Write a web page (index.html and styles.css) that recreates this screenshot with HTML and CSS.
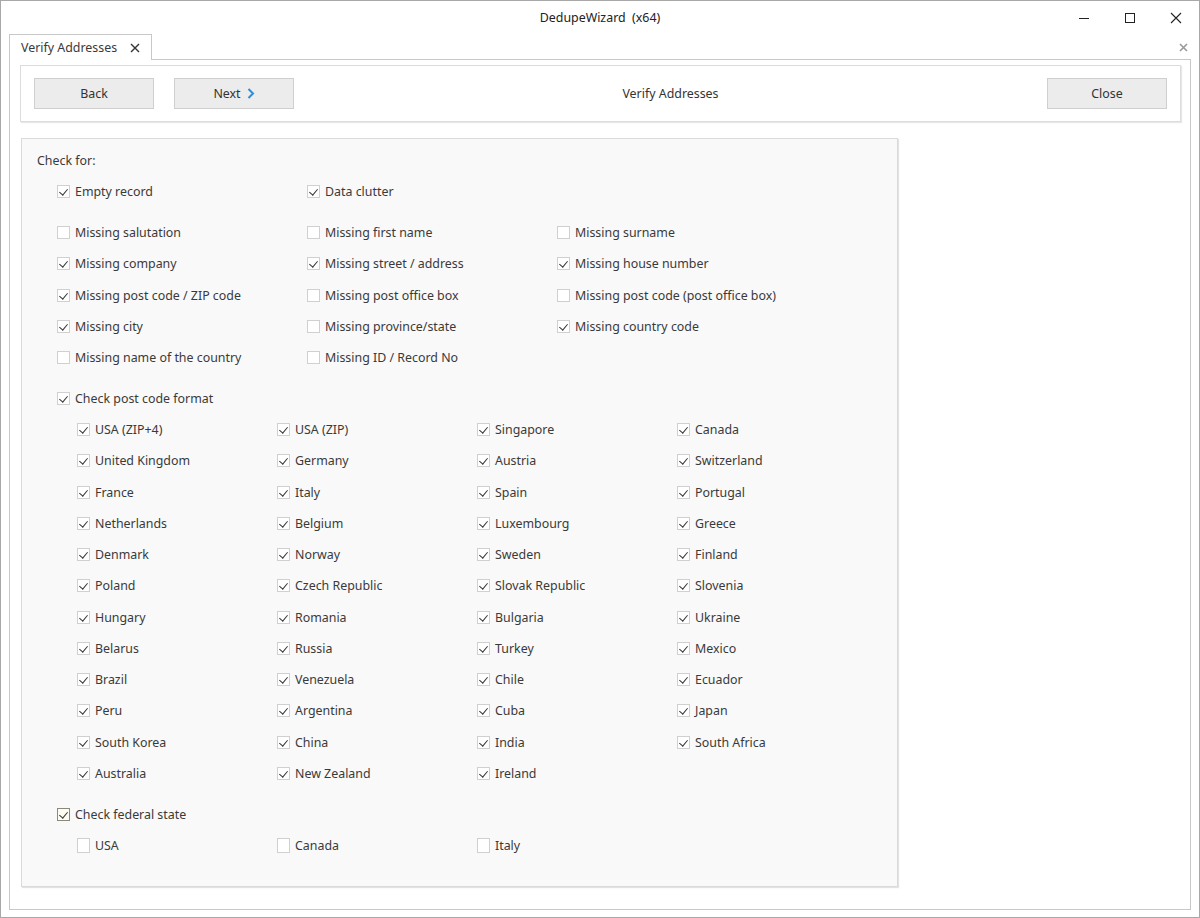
FILE: index.html
```html
<!DOCTYPE html>
<html>
<head>
<meta charset="utf-8">
<link rel="stylesheet" href="styles.css">
</head>
<body>
<div class="window">
  <div class="titlebar">
    <div class="title">DedupeWizard&nbsp; (x64)</div>
    <div class="controls">
      <span class="ctl"><svg width="12" height="12" viewBox="0 0 12 12"><path d="M1 6.5H11" stroke="#222" stroke-width="1"/></svg></span>
      <span class="ctl"><svg width="12" height="12" viewBox="0 0 12 12"><rect x="1.5" y="1.5" width="9" height="9" fill="none" stroke="#222" stroke-width="1"/></svg></span>
      <span class="ctl"><svg width="12" height="12" viewBox="0 0 12 12"><path d="M1 1L11 11M11 1L1 11" stroke="#222" stroke-width="1.1"/></svg></span>
    </div>
  </div>
  <div class="tabstrip">
    <div class="tab">
      <span>Verify Addresses</span>
      <svg class="tabx" width="10" height="10" viewBox="0 0 10 10"><path d="M1 1L9 9M9 1L1 9" stroke="#333" stroke-width="1.4"/></svg>
    </div>
    <svg class="stripx" width="9" height="9" viewBox="0 0 9 9"><path d="M1 1L8 8M8 1L1 8" stroke="#999" stroke-width="1.6"/></svg>
  </div>
  <div class="content">
    <div class="toolbar">
      <div class="btn">Back</div>
      <div class="btn">Next <svg class="chev" width="8" height="11" viewBox="0 0 8 11"><path d="M1.5 1L6 5.5L1.5 10" fill="none" stroke="#2a8fd6" stroke-width="2"/></svg></div>
      <div class="tb-title">Verify Addresses</div>
      <div class="btn">Close</div>
    </div>
    <div class="group">
      <div class="row label-row">Check for:</div>
      <div class="grid main gap-after">
        <label class="item"><span class="cb on"></span>Empty record</label>
        <label class="item"><span class="cb on"></span>Data clutter</label>
      </div>
      <div class="grid main">
        <label class="item"><span class="cb"></span>Missing salutation</label>
        <label class="item"><span class="cb"></span>Missing first name</label>
        <label class="item"><span class="cb"></span>Missing surname</label>
        <label class="item"><span class="cb on"></span>Missing company</label>
        <label class="item"><span class="cb on"></span>Missing street / address</label>
        <label class="item"><span class="cb on"></span>Missing house number</label>
        <label class="item"><span class="cb on"></span>Missing post code / ZIP code</label>
        <label class="item"><span class="cb"></span>Missing post office box</label>
        <label class="item"><span class="cb"></span>Missing post code (post office box)</label>
        <label class="item"><span class="cb on"></span>Missing city</label>
        <label class="item"><span class="cb"></span>Missing province/state</label>
        <label class="item"><span class="cb on"></span>Missing country code</label>
        <label class="item"><span class="cb"></span>Missing name of the country</label>
        <label class="item"><span class="cb"></span>Missing ID / Record No</label>
      </div>
      <div class="grid main gap-before">
        <label class="item"><span class="cb on"></span>Check post code format</label>
      </div>
      <div class="grid sub">
        <label class="item"><span class="cb on"></span>USA (ZIP+4)</label>
        <label class="item"><span class="cb on"></span>USA (ZIP)</label>
        <label class="item"><span class="cb on"></span>Singapore</label>
        <label class="item"><span class="cb on"></span>Canada</label>
        <label class="item"><span class="cb on"></span>United Kingdom</label>
        <label class="item"><span class="cb on"></span>Germany</label>
        <label class="item"><span class="cb on"></span>Austria</label>
        <label class="item"><span class="cb on"></span>Switzerland</label>
        <label class="item"><span class="cb on"></span>France</label>
        <label class="item"><span class="cb on"></span>Italy</label>
        <label class="item"><span class="cb on"></span>Spain</label>
        <label class="item"><span class="cb on"></span>Portugal</label>
        <label class="item"><span class="cb on"></span>Netherlands</label>
        <label class="item"><span class="cb on"></span>Belgium</label>
        <label class="item"><span class="cb on"></span>Luxembourg</label>
        <label class="item"><span class="cb on"></span>Greece</label>
        <label class="item"><span class="cb on"></span>Denmark</label>
        <label class="item"><span class="cb on"></span>Norway</label>
        <label class="item"><span class="cb on"></span>Sweden</label>
        <label class="item"><span class="cb on"></span>Finland</label>
        <label class="item"><span class="cb on"></span>Poland</label>
        <label class="item"><span class="cb on"></span>Czech Republic</label>
        <label class="item"><span class="cb on"></span>Slovak Republic</label>
        <label class="item"><span class="cb on"></span>Slovenia</label>
        <label class="item"><span class="cb on"></span>Hungary</label>
        <label class="item"><span class="cb on"></span>Romania</label>
        <label class="item"><span class="cb on"></span>Bulgaria</label>
        <label class="item"><span class="cb on"></span>Ukraine</label>
        <label class="item"><span class="cb on"></span>Belarus</label>
        <label class="item"><span class="cb on"></span>Russia</label>
        <label class="item"><span class="cb on"></span>Turkey</label>
        <label class="item"><span class="cb on"></span>Mexico</label>
        <label class="item"><span class="cb on"></span>Brazil</label>
        <label class="item"><span class="cb on"></span>Venezuela</label>
        <label class="item"><span class="cb on"></span>Chile</label>
        <label class="item"><span class="cb on"></span>Ecuador</label>
        <label class="item"><span class="cb on"></span>Peru</label>
        <label class="item"><span class="cb on"></span>Argentina</label>
        <label class="item"><span class="cb on"></span>Cuba</label>
        <label class="item"><span class="cb on"></span>Japan</label>
        <label class="item"><span class="cb on"></span>South Korea</label>
        <label class="item"><span class="cb on"></span>China</label>
        <label class="item"><span class="cb on"></span>India</label>
        <label class="item"><span class="cb on"></span>South Africa</label>
        <label class="item"><span class="cb on"></span>Australia</label>
        <label class="item"><span class="cb on"></span>New Zealand</label>
        <label class="item"><span class="cb on"></span>Ireland</label>
      </div>
      <div class="grid main gap-before">
        <label class="item"><span class="cb on focus"></span>Check federal state</label>
      </div>
      <div class="grid sub">
        <label class="item"><span class="cb tall"></span>USA</label>
        <label class="item"><span class="cb tall"></span>Canada</label>
        <label class="item"><span class="cb tall"></span>Italy</label>
      </div>
    </div>
  </div>
</div>
</body>
</html>
```

FILE: styles.css
```css
* { box-sizing: border-box; }
html, body { margin: 0; padding: 0; }
body {
  width: 1200px;
  height: 918px;
  background: #fff;
  font-family: "Noto Sans", "Open Sans", sans-serif;
  font-size: 12.4px;
  color: #3a3a3a;
  overflow: hidden;
}
.window {
  width: 1200px;
  height: 918px;
  border: 1px solid #a8a8a8;
  display: flex;
  flex-direction: column;
}
.titlebar {
  height: 33px;
  position: relative;
  display: flex;
  align-items: center;
  justify-content: center;
}
.title { font-size: 12.4px; color: #222; }
.controls {
  position: absolute;
  right: 0;
  top: 0;
  display: flex;
  height: 33px;
}
.ctl {
  width: 46px;
  height: 33px;
  display: flex;
  align-items: center;
  justify-content: center;
}
.tabstrip {
  height: 25px;
  display: flex;
  align-items: flex-end;
  padding-left: 8px;
  position: relative;
}
.tab {
  width: 143px;
  height: 26px;
  border: 1px solid #c8c8c8;
  border-bottom: none;
  background: #fff;
  display: flex;
  align-items: center;
  padding-left: 11px;
  margin-bottom: -1px;
  position: relative;
  z-index: 1;
}
.tabx { margin-left: 13px; }
.stripx { position: absolute; right: 11px; top: 9px; }
.content {
  flex: 1;
  margin: 0 8px 7px 8px;
  border: 1px solid #c8c8c8;
  padding: 5px 9px 0 10px;
  display: flex;
  flex-direction: column;
  align-items: flex-start;
}
.toolbar {
  width: 1161px;
  height: 57px;
  border: 1px solid #dcdcdc;
  box-shadow: 1px 1px 1px #e8e8e8;
  display: flex;
  align-items: center;
  padding: 0 13px;
  gap: 20px;
}
.btn {
  width: 120px;
  height: 31px;
  background: #ececec;
  border: 1px solid #cfcfcf;
  display: flex;
  align-items: center;
  justify-content: center;
  color: #333;
}
.chev { margin-left: 6px; }
.tb-title { flex: 1; text-align: center; color: #333; }
.group {
  margin-top: 16px;
  margin-left: 1px;
  width: 877px;
  background: #f9f9f9;
  border: 1px solid #dadada;
  box-shadow: 1px 1px 1px #e3e3e3;
  padding: 6px 0 25px 15px;
}
.label-row {
  height: 31.25px;
  display: flex;
  align-items: center;
}
.grid { display: grid; }
.main { grid-template-columns: repeat(3, 250px); padding-left: 20px; }
.sub { grid-template-columns: repeat(4, 200px); padding-left: 40px; }
.gap-after { margin-bottom: 9.5px; }
.gap-before { margin-top: 9.5px; }
.item {
  height: 31.25px;
  display: flex;
  align-items: center;
  white-space: nowrap;
}
.cb {
  width: 13px;
  height: 13px;
  border: 1px solid #d0d0d0;
  background: #fff;
  margin-right: 5px;
  flex: none;
  position: relative;
}
.cb.tall { height: 15px; }
.cb.on::after {
  content: "";
  position: absolute;
  left: 3px;
  top: 1px;
  width: 4px;
  height: 7px;
  border-right: 1.3px solid #333;
  border-bottom: 1.3px solid #333;
  transform: rotate(40deg);
}
.cb.focus { border-color: #8a8a7a; background: #fdfdf2; }
```
